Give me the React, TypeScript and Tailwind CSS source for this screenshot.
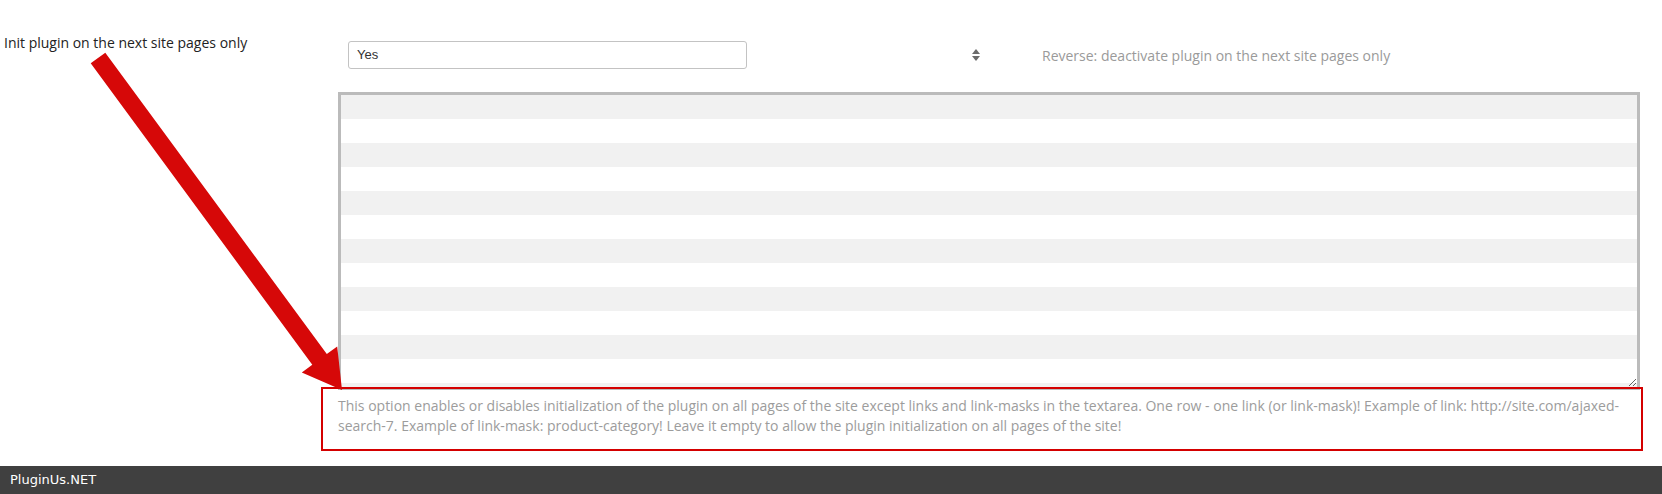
import React from 'react';

function SortArrows() {
  return (
    <svg width="8" height="12" viewBox="0 0 8 12" className="block">
      <polygon points="4,0 8,5 0,5" fill="#6b6b6b" />
      <polygon points="0,7 8,7 4,12" fill="#6b6b6b" />
    </svg>
  );
}

function AnnotationArrow() {
  // red pointer drawn over the form, from the label to the help text
  return (
    <svg
      className="pointer-events-none absolute left-0 top-0"
      width="1662"
      height="494"
      viewBox="0 0 1662 494"
    >
      <polygon
        points="105.3,52.7 326.8,354.1 337.2,346.4 342,390 301.8,372.4 312.3,364.7 90.7,63.3"
        fill="#d60808"
      />
    </svg>
  );
}

export default function App() {
  return (
    <div className="relative flex h-[494px] w-[1662px] flex-col overflow-hidden bg-white font-['Open_Sans',sans-serif]">
      <div className="flex flex-1">
        <div className="w-[338px] shrink-0 pl-[4px] pt-[33px] text-[14px] leading-[20px] text-[#222]">
          Init plugin on the next site pages only
        </div>

        <div className="flex-1 pr-[22px]">
          <div className="mt-[41px] flex h-[28px] items-center">
            <div className="ml-[10px] flex h-[28px] w-[399px] items-center rounded-[3px] border border-[#c3c3c3] pl-[8px] font-['Liberation_Sans',sans-serif] text-[13px] text-[#333]">
              Yes
            </div>
            <div className="ml-[225px]">
              <SortArrows />
            </div>
            <div className="ml-[62px] text-[14px] text-[#9a9a9a]">
              Reverse: deactivate plugin on the next site pages only
            </div>
          </div>

          <textarea
            className="mt-[23px] block h-[298px] w-full resize-y border-[3px] border-[#bbbbbb] bg-[repeating-linear-gradient(#f1f1f1_0px,#f1f1f1_24px,#ffffff_24px,#ffffff_48px)] outline-none"
            defaultValue=""
          />

          <p className="mt-[6px] pr-[4px] text-[14px] leading-[20px] text-[#9c9c9c]">
            This option enables or disables initialization of the plugin on all pages of the site except links and
            link-masks in the textarea. One row - one link (or link-mask)! Example of link: http://site.com/ajaxed-search-7.
            Example of link-mask: product-category! Leave it empty to allow the plugin initialization on all pages of the
            site!
          </p>
        </div>
      </div>

      <div className="flex h-[28px] shrink-0 items-center bg-[#404040] pl-[10px] font-['DejaVu_Sans',sans-serif] text-[13px] text-white">
        PluginUs.NET
      </div>

      <div className="pointer-events-none absolute left-[321px] top-[387px] h-[64px] w-[1322px] border-2 border-[#d40000]" />
      <AnnotationArrow />
    </div>
  );
}
